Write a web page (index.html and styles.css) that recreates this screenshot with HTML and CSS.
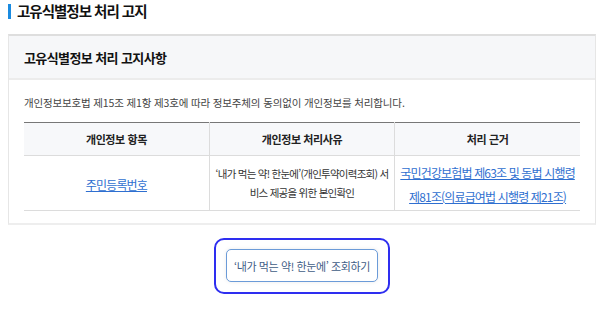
FILE: index.html
```html
<!DOCTYPE html>
<html lang="ko">
<head>
<meta charset="utf-8">
<link rel="stylesheet" href="styles.css">
</head>
<body>
<h2 class="page-title">고유식별정보 처리 고지</h2>
<section class="card">
  <div class="card-head">고유식별정보 처리 고지사항</div>
  <div class="card-body">
    <p class="desc">개인정보보호법 제15조 제1항 제3호에 따라 정보주체의 동의없이 개인정보를 처리합니다.</p>
    <table class="info">
      <thead>
        <tr><th>개인정보 항목</th><th>개인정보 처리사유</th><th>처리 근거</th></tr>
      </thead>
      <tbody>
        <tr>
          <td><a class="link">주민등록번호</a></td>
          <td class="reason">‘내가 먹는 약! 한눈에’(개인투약이력조회) 서비스 제공을 위한 본인확인</td>
          <td class="basis"><a class="link">국민건강보험법 제63조 및 동법 시행령 제81조(의료급여법 시행령 제21조)</a></td>
        </tr>
      </tbody>
    </table>
  </div>
</section>
<div class="actions">
  <div class="focus-ring">
    <button class="btn">‘내가 먹는 약! 한눈에’ 조회하기</button>
  </div>
</div>
</body>
</html>
```
FILE: styles.css
```css
* { box-sizing: border-box; }
html, body { background: #fff; }
body {
  margin: 0 4px 0 8px;
  font-family: "Noto Sans CJK KR", "Noto Sans", sans-serif;
  color: #222;
}
.page-title {
  margin: 0;
  height: 34px;
  padding-top: 2px;
  font-size: 14.5px;
  font-weight: 700;
  line-height: 18px;
  letter-spacing: -1px;
  color: #111;
  display: flex;
  align-items: flex-start;
  gap: 6px;
}
.page-title::before {
  content: "";
  display: block;
  width: 3px;
  height: 15px;
  margin-top: 2px;
  background: #1a8be0;
}
.card {
  border: 1px solid #e6e6e6;
  border-top: 2px solid #dedede;
  border-bottom: 2px solid #eeeeee;
  height: 191px;
}
.card-head {
  background: #f6f7f9;
  border-bottom: 2px solid #ececec;
  height: 44px;
  padding: 0 15px;
  display: flex;
  align-items: center;
  font-size: 13px;
  font-weight: 700;
  letter-spacing: -0.6px;
  color: #111;
}
.card-body {
  padding: 15px 15px 0;
}
.desc {
  margin: 0 0 11px;
  font-size: 10.5px;
  line-height: 16px;
  letter-spacing: -0.15px;
  color: #444;
}
.info {
  width: 100%;
  border-collapse: collapse;
  table-layout: fixed;
  border-top: 1.5px solid #777;
}
.info th {
  background: #f7f8fa;
  height: 33px;
  font-size: 11px;
  font-weight: 700;
  letter-spacing: -0.4px;
  color: #222;
  border-bottom: 1px solid #dcdcdc;
}
.info td {
  height: 55px;
  text-align: center;
  border-bottom: 1px solid #dcdcdc;
  padding: 0 2px;
}
.info th + th, .info td + td { border-left: 1px solid #dcdcdc; }
.reason {
  font-size: 10.5px;
  line-height: 19px;
  letter-spacing: -0.75px;
  color: #333;
}
.basis { word-break: keep-all; }
.link {
  font-size: 12px;
  line-height: 20px;
  letter-spacing: -0.85px;
  color: #2f6fd0;
  text-decoration: underline;
}
.actions {
  display: flex;
  justify-content: center;
  padding-top: 13px;
}
.focus-ring {
  border: 2.5px solid #2e2ef0;
  border-radius: 10px;
  padding: 9px 10px 10px;
}
.btn {
  font-family: inherit;
  font-size: 11px;
  letter-spacing: -0.4px;
  white-space: nowrap;
  padding: 0;
  color: #3f5d86;
  background: #fff;
  border: 1px solid #6b9bd8;
  border-radius: 5px;
  width: 152px;
  height: 33px;
  box-shadow: 0 0 4px rgba(0,0,0,0.08);
  cursor: pointer;
}
```
